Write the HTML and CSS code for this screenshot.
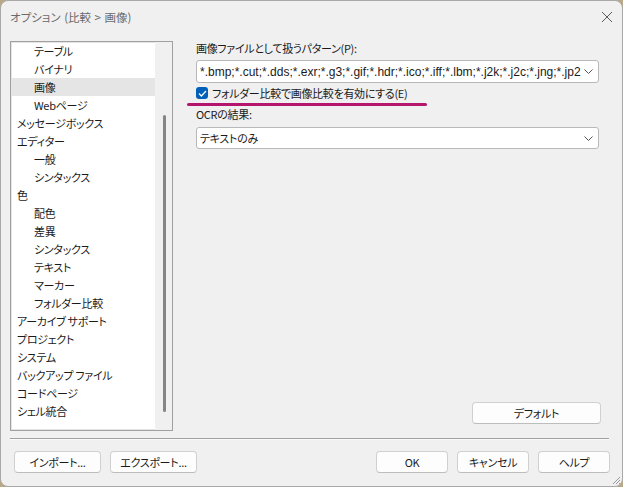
FILE: index.html
```html
<!DOCTYPE html>
<html lang="ja">
<head>
  <meta charset="UTF-8">
  <title>オプション (比較 > 画像)</title>
  <link rel="stylesheet" href="styles.css">
</head>
<body>
  <div class="window">
    <div class="titlebar">
      <span class="title">オプション (比較 &gt; 画像)</span>
      <svg class="close" width="12" height="12" viewBox="0 0 12 12">
        <path d="M1 1 L11 11 M11 1 L1 11" stroke="#5a5a5a" stroke-width="1" fill="none"/>
      </svg>
    </div>

    <div class="main">
      <!-- ツリー -->
      <div class="tree">
        <ul class="tree-list">
          <li class="child">テーブル</li>
          <li class="child">バイナリ</li>
          <li class="child selected">画像</li>
          <li class="child">Webページ</li>
          <li>メッセージボックス</li>
          <li>エディター</li>
          <li class="child">一般</li>
          <li class="child">シンタックス</li>
          <li>色</li>
          <li class="child">配色</li>
          <li class="child">差異</li>
          <li class="child">シンタックス</li>
          <li class="child">テキスト</li>
          <li class="child">マーカー</li>
          <li class="child">フォルダー比較</li>
          <li>アーカイブ サポート</li>
          <li>プロジェクト</li>
          <li>システム</li>
          <li>バックアップ ファイル</li>
          <li>コードページ</li>
          <li>シェル統合</li>
        </ul>
        <div class="scrollbar"><div class="thumb"></div></div>
      </div>

      <!-- 設定パネル -->
      <div class="panel">
        <div class="field-label">画像ファイルとして扱うパターン(P):</div>
        <div class="combo">
          <span class="combo-text latin">*.bmp;*.cut;*.dds;*.exr;*.g3;*.gif;*.hdr;*.ico;*.iff;*.lbm;*.j2k;*.j2c;*.jng;*.jp2</span>
          <svg class="chevron" width="9" height="5" viewBox="0 0 9 5"><path d="M0.5 0.5 L4.5 4.5 L8.5 0.5" stroke="#555" fill="none"/></svg>
        </div>
        <div class="check">
          <span class="box">
            <svg width="9" height="7" viewBox="0 0 9 7"><path d="M1 3.5 L3.4 6 L8 1" stroke="#fff" stroke-width="1.3" fill="none"/></svg>
          </span>
          フォルダー比較で画像比較を有効にする(E)
        </div>
        <div class="mark"></div>
        <div class="field-label ocr">OCRの結果:</div>
        <div class="combo short">
          <span class="combo-text">テキストのみ</span>
          <svg class="chevron" width="9" height="5" viewBox="0 0 9 5"><path d="M0.5 0.5 L4.5 4.5 L8.5 0.5" stroke="#555" fill="none"/></svg>
        </div>
        <button class="btn btn-default">デフォルト</button>
      </div>
    </div>

    <div class="separator"></div>

    <div class="footer">
      <button class="btn wide">インポート...</button>
      <button class="btn wide">エクスポート...</button>
      <div class="spacer"></div>
      <button class="btn">OK</button>
      <button class="btn">キャンセル</button>
      <button class="btn">ヘルプ</button>
    </div>

    <svg class="grip" width="10" height="10" viewBox="0 0 10 10">
      <path d="M9 2 L2 9 M9 5 L5 9 M9 8 L8 9" stroke="#9a9a9a" stroke-width="1" fill="none"/>
    </svg>
  </div>
</body>
</html>
```

FILE: styles.css
```css
body {
  margin: 0;
  background-color: #b9a888;
  font-family: "Noto Sans CJK JP", sans-serif;
  font-size: 11px;
  letter-spacing: -0.3px;
  color: #1a1a1a;
  font-feature-settings: "palt";
}

.window {
  position: relative;
  width: 621px;
  height: 485px;
  background-color: #f0f0f0;
  border: 1px solid #a8a8a8;
  border-radius: 8px;
  display: flex;
  flex-direction: column;
}

.titlebar {
  height: 31px;
  display: flex;
  align-items: center;
  justify-content: space-between;
  padding: 0 9px 0 9px;
}

.title {
  color: #6a6a6a;
  font-size: 11.5px;
  letter-spacing: 0;
  word-spacing: 1px;
}

.main {
  display: flex;
  margin-top: 9px;
  padding-left: 9px;
  height: 390px;
}

/* ツリー */
.tree {
  width: 161px;
  height: 388px;
  border: 1px solid #a0a0a0;
  background-color: #fff;
  display: flex;
  box-shadow: inset 0 0 0 1px #e4e4e4;
}

.tree-list {
  list-style: none;
  margin: 0;
  padding: 0;
  width: 144px;
}

.tree-list li {
  height: 18px;
  line-height: 18px;
  padding-left: 6px;
  white-space: nowrap;
}

.tree-list li.child {
  padding-left: 23px;
}

.tree-list li.selected {
  background-color: #e5e5e5;
}

.scrollbar {
  width: 17px;
  background-color: #f0f0f0;
  padding-top: 73px;
  display: flex;
  justify-content: center;
}

.thumb {
  width: 3px;
  height: 297px;
  border-radius: 2px;
  background-color: #858585;
  margin-left: 1px;
}

/* 設定パネル */
.panel {
  position: relative;
  margin-left: 23px;
  width: 405px;
  display: flex;
  flex-direction: column;
}

.field-label {
  height: 15px;
  line-height: 15px;
}

.combo {
  margin-top: 4px;
  width: 401px;
  height: 21px;
  border: 1px solid #b8b8b8;
  border-radius: 3px;
  background-color: #fff;
  display: flex;
  align-items: center;
  justify-content: space-between;
}

.combo-text {
  padding-left: 3px;
  white-space: nowrap;
}

.latin {
  font-family: "Liberation Sans", "Noto Sans CJK JP", sans-serif;
  font-size: 12px;
  letter-spacing: 0;
}

.chevron {
  margin-right: 5px;
  flex-shrink: 0;
}

.check {
  margin-top: 2px;
  height: 16px;
  display: flex;
  align-items: center;
}

.box {
  width: 12px;
  height: 12px;
  border-radius: 3px;
  background-color: #005fb8;
  display: flex;
  align-items: center;
  justify-content: center;
  margin-right: 4px;
}

/* 注目用の下線 */
.mark {
  position: absolute;
  left: -9px;
  top: 62px;
  width: 240px;
  height: 3px;
  border-radius: 2px;
  background-color: #b3166c;
}

.field-label.ocr {
  margin-top: 6px;
}

.combo.short {
  margin-top: 5px;
  height: 20px;
}

/* ボタン */
.btn {
  font-family: "Noto Sans CJK JP", sans-serif;
  font-feature-settings: "palt";
  font-size: 11px;
  letter-spacing: -0.3px;
  color: #1a1a1a;
  width: 72px;
  height: 22px;
  padding: 0;
  background-color: #fdfdfd;
  border: 1px solid #d0d0d0;
  border-bottom-color: #bdbdbd;
  border-radius: 4px;
}

.btn-default {
  margin-top: auto;
  margin-bottom: 7px;
  align-self: flex-end;
  width: 129px;
}

.separator {
  margin: 7px 13px 0 9px;
  height: 1px;
  background-color: #a0a0a0;
  border-bottom: 1px solid #fafafa;
}

.footer {
  display: flex;
  gap: 9px;
  padding: 11px 12px 0 13px;
}

.btn.wide {
  width: 87px;
}

.spacer {
  flex: 1;
}

.grip {
  position: absolute;
  right: 1px;
  bottom: 1px;
}
```
